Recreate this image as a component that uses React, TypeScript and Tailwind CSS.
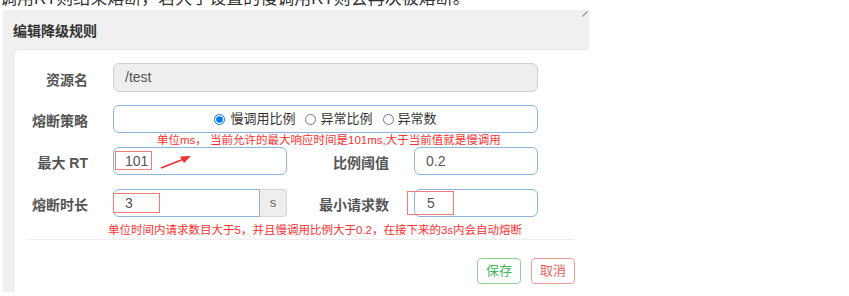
import React from "react";

const cjk = { fontFamily: '"Liberation Sans", "Noto Sans CJK SC", sans-serif' };

export default function App() {
  return (
    <div className="w-[849px] h-[296px] bg-white overflow-hidden relative" style={cjk}>
      <div className="h-[10px] overflow-hidden">
        <div className="-mt-[12px] text-[17px] leading-[22px] text-[#333] whitespace-nowrap">
          调用RT则结束熔断，若大于设置的慢调用RT则会再次被熔断。
        </div>
      </div>
      <div className="ml-[3px] w-[586px] h-[282px] bg-[#f0f0f0] flex flex-col relative">
        <div className="h-[39px] pl-[10px] pt-[3px] flex items-center text-[14px] font-bold text-[#333]">
          编辑降级规则
        </div>
        <svg className="absolute right-[1px] top-[1px]" width="6" height="6" viewBox="0 0 6 6">
          <path d="M0.5 5.5 L5.5 0.5" stroke="#999" strokeWidth="1.3" />
        </svg>
        <div className="ml-[10px] flex-1 bg-white rounded-tl-[6px] border-t border-l border-[#e6e6e6] flex flex-col relative">
          {/* row 1 */}
          <div className="mt-[13px] h-[29px] flex items-center">
            <div className="w-[74px] text-right text-[14px] font-bold text-[#555] pt-[5px]">资源名</div>
            <div className="ml-[25px] w-[425px] h-[29px] rounded-[6px] border border-[#d0d0d0] bg-[#eeeeee] flex items-center pl-[11px] text-[14px] text-[#555]">
              /test
            </div>
          </div>
          {/* row 2 */}
          <div className="mt-[13px] h-[28px] flex items-center">
            <div className="w-[74px] text-right text-[14px] font-bold text-[#555] pt-[5px]">熔断策略</div>
            <div className="ml-[25px] w-[425px] h-[28px] rounded-[6px] border border-[#8fb3dd] flex items-center justify-center text-[13px] text-[#333] gap-[10px]">
              <label className="flex items-center gap-[5px]">
                <input type="radio" name="g" defaultChecked className="m-0 w-[11px] h-[11px]" />
                慢调用比例
              </label>
              <label className="flex items-center gap-[4px]">
                <input type="radio" name="g" className="m-0 w-[11px] h-[11px]" />
                异常比例
              </label>
              <label className="flex items-center gap-[4px]">
                <input type="radio" name="g" className="m-0 w-[11px] h-[11px]" />
                异常数
              </label>
            </div>
          </div>
          {/* annotation 1 */}
          <div className="h-[14px] pl-[143px] text-[11.5px] leading-[14px] text-[#ff3030] whitespace-nowrap">
            单位ms， 当前允许的最大响应时间是101ms,大于当前值就是慢调用
          </div>
          {/* row 3 */}
          <div className="h-[28px] flex items-center relative">
            <div className="w-[74px] text-right text-[14px] font-bold text-[#555] pt-[5px]">最大 RT</div>
            <div className="ml-[25px] w-[174px] h-[28px] rounded-[6px] border border-[#8fb3dd] flex items-center pl-[11px] text-[14px] text-[#555] relative">
              101
              <div className="absolute left-[1px] top-[3px] w-[37px] h-[19px] border border-[#f47a7a]" />
              <svg className="absolute left-[46px] top-[6px]" width="32" height="16" viewBox="0 0 32 16">
                <path d="M1 14 L24 5" stroke="#f03030" strokeWidth="1.6" />
                <path d="M31 2 L20 2.5 L24 9 Z" fill="#f03030" />
              </svg>
            </div>
            <div className="w-[102px] text-right text-[14px] font-bold text-[#555] pt-[4px]">比例阈值</div>
            <div className="ml-[25px] w-[124px] h-[28px] rounded-[6px] border border-[#8fb3dd] flex items-center pl-[11px] text-[14px] text-[#555]">
              0.2
            </div>
          </div>
          {/* row 4 */}
          <div className="mt-[14px] h-[28px] flex items-center">
            <div className="w-[74px] text-right text-[14px] font-bold text-[#555] pt-[5px]">熔断时长</div>
            <div className="ml-[25px] flex h-[28px]">
              <div className="w-[147px] h-[28px] rounded-l-[6px] border border-[#8fb3dd] flex items-center pl-[11px] text-[14px] text-[#555] relative">
                3
                <div className="absolute left-[-1px] top-[3px] w-[47px] h-[20px] border border-[#f47a7a]" />
              </div>
              <div className="w-[27px] h-[28px] rounded-r-[4px] border border-l-0 border-[#d6d6d6] bg-[#eeeeee] flex items-center justify-center text-[13px] text-[#666]">
                s
              </div>
            </div>
            <div className="w-[102px] text-right text-[14px] font-bold text-[#555] pt-[4px]">最小请求数</div>
            <div className="ml-[25px] w-[124px] h-[28px] rounded-[6px] border border-[#8fb3dd] flex items-center pl-[12px] text-[14px] text-[#555] relative">
              5
              <div className="absolute left-[-8px] top-[1px] w-[47px] h-[24px] border border-[#f47a7a]" />
            </div>
          </div>
          {/* annotation 2 */}
          <div className="h-[22px] pt-[6px] pl-[94px] text-[11.5px] leading-[14px] text-[#ff3030] whitespace-nowrap">
            单位时间内请求数目大于5，并且慢调用比例大于0.2，在接下来的3s内会自动熔断
          </div>
          <div className="ml-[12px] w-[549px] h-[1px] bg-[#eeeeee]" />
          {/* buttons */}
          <div className="mt-[18px] ml-[463px] flex gap-[10px]">
            <button className="w-[44px] h-[26px] rounded-[4px] border border-[#8fd09d] bg-white text-[13px] text-[#45b860]">
              保存
            </button>
            <button className="w-[44px] h-[26px] rounded-[4px] border border-[#f29a9a] bg-white text-[13px] text-[#ef5d5d]">
              取消
            </button>
          </div>
        </div>
      </div>
    </div>
  );
}
